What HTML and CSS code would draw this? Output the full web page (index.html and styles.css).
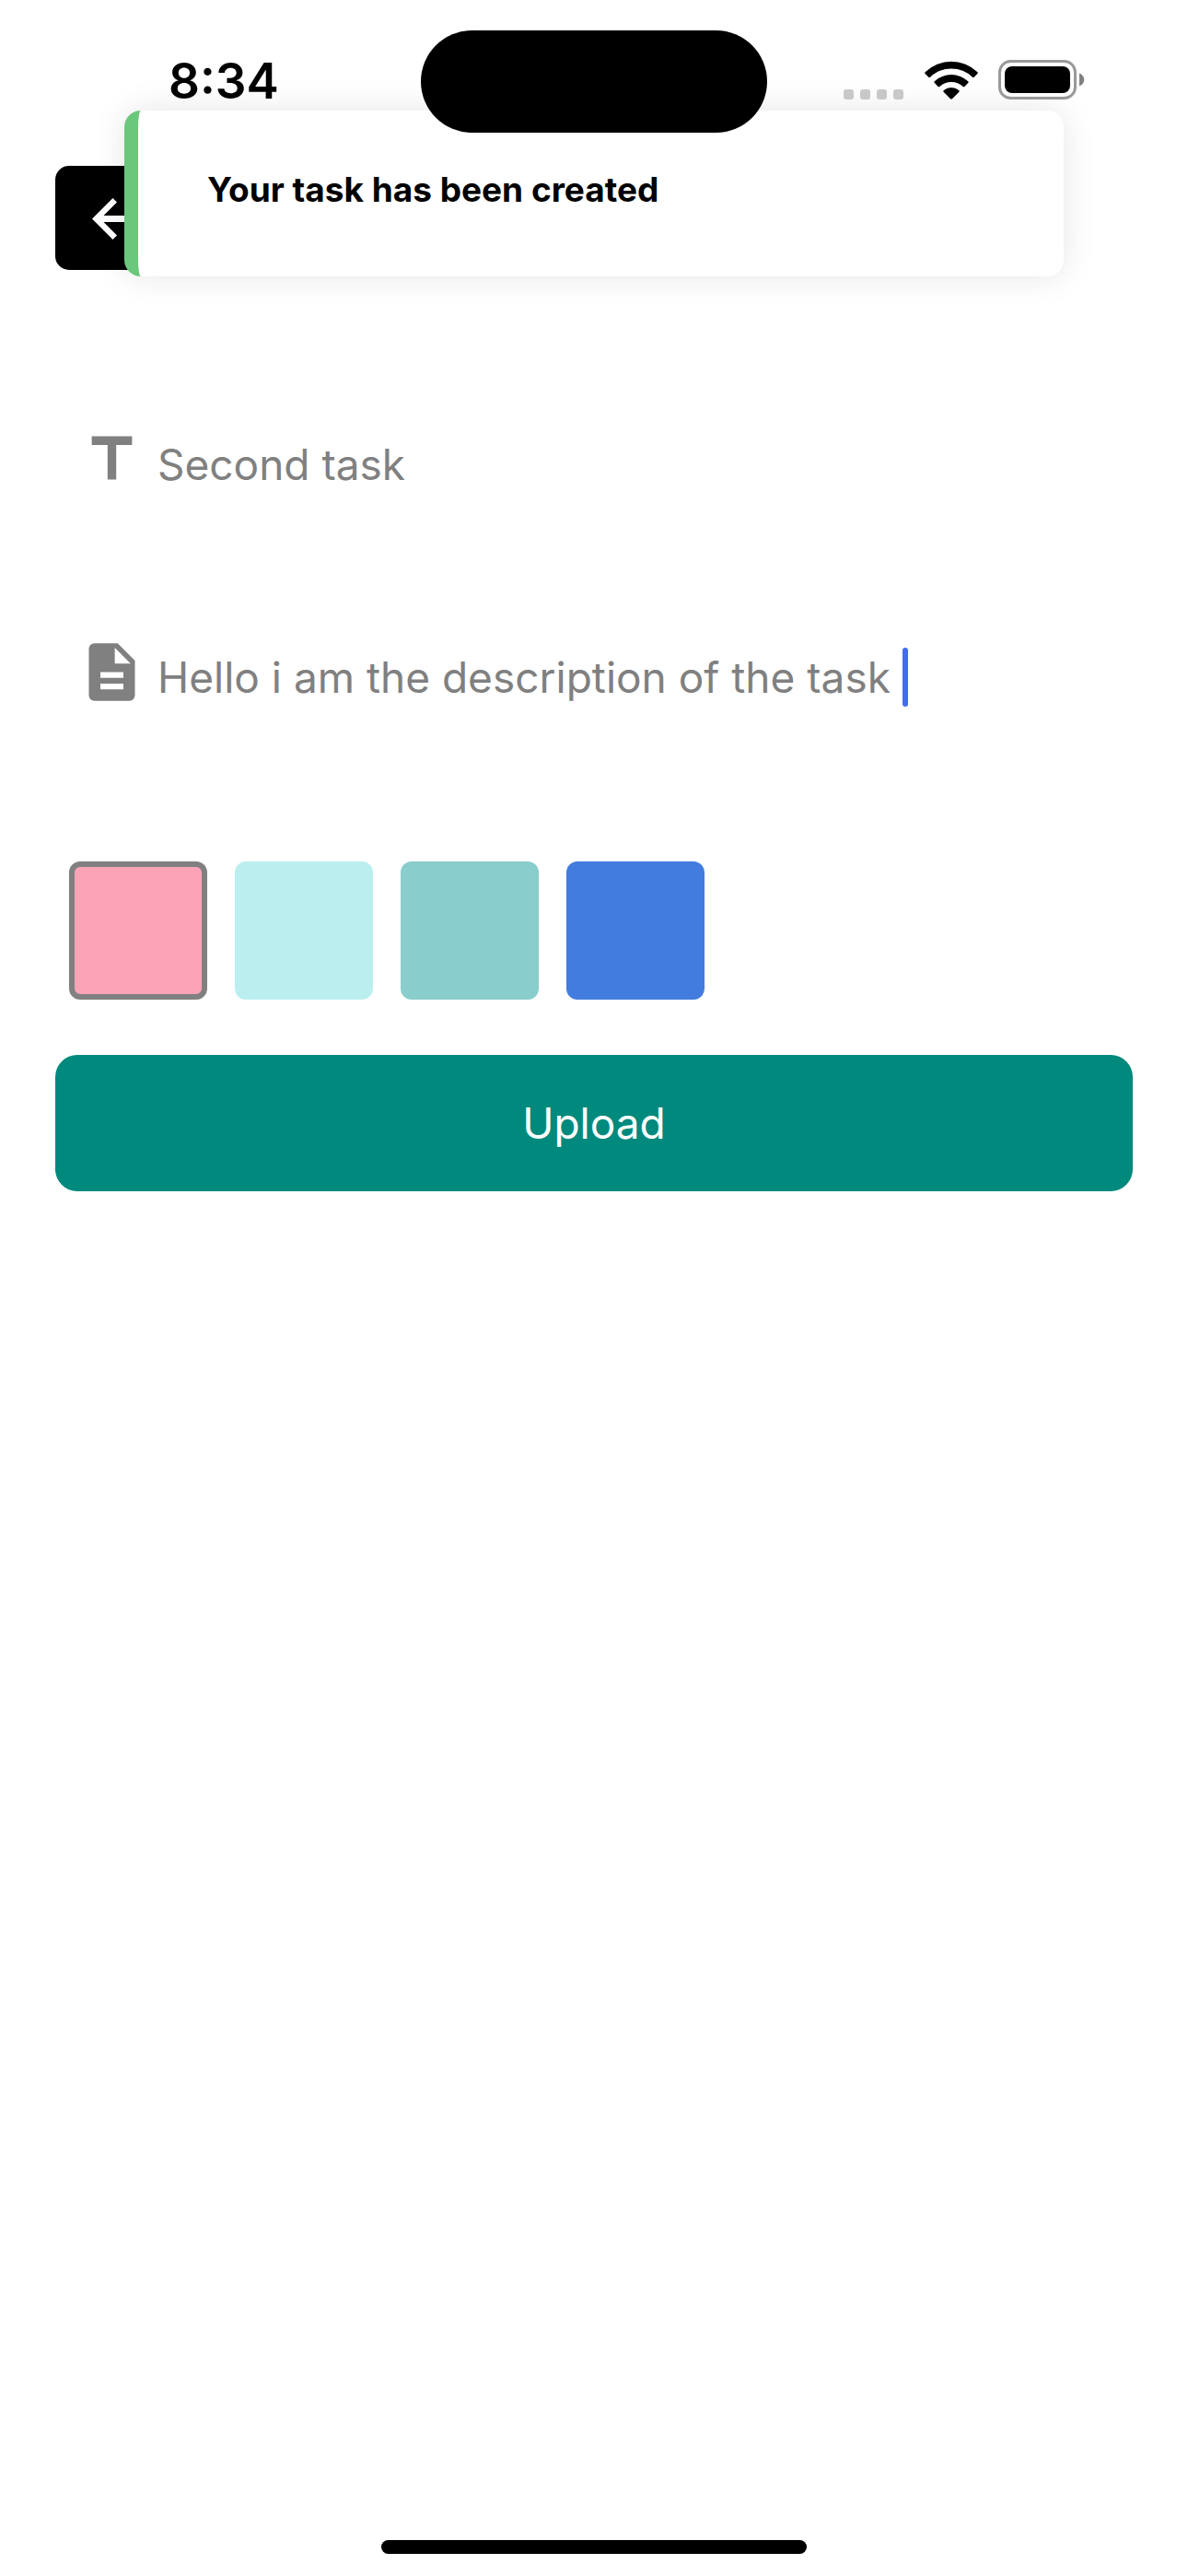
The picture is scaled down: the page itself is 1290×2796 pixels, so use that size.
FILE: index.html
```html
<!DOCTYPE html>
<html lang="en">
<head>
  <meta charset="utf-8">
  <meta name="viewport" content="width=device-width, initial-scale=1">
  <title>New task</title>
  <link rel="stylesheet" href="styles.css">
</head>
<body>
  <div class="screen">
    <header class="status-bar">
      <time class="clock">8:34</time>
      <div class="status-icons">
        <svg class="signal" viewBox="0 0 65 11" aria-hidden="true">
          <rect width="11" height="11" rx="3"/>
          <rect x="18" width="11" height="11" rx="3"/>
          <rect x="36" width="11" height="11" rx="3"/>
          <rect x="54" width="11" height="11" rx="3"/>
        </svg>
        <svg class="wifi" viewBox="0 0 58 42" aria-hidden="true">
          <path d="M.6 12.2a41 41 0 0 1 56.8 0q.9.9 0 1.8l-3.700 3.700q-.9.9-1.800 0a33 33 0 0 0-45.800 0q-.9.900-1.800 0L.6 14q-.9-.9 0-1.800z"/>
          <path d="M10.800 22.300a26.500 26.500 0 0 1 36.400 0q.9.900 0 1.800l-3.800 3.800q-.9.900-1.800 0a18.400 18.400 0 0 0-25.200 0q-.9.900-1.800 0l-3.800-3.800q-.9-.9 0-1.800z"/>
          <path d="M20.800 32a12.500 12.500 0 0 1 16.400 0q1 .9 0 1.900l-7.300 7.300q-.9.900-1.800 0l-7.300-7.300q-1-1 0-1.900z"/>
        </svg>
        <svg class="battery" viewBox="0 0 94 43" aria-hidden="true">
          <rect x="1.500" y="1.500" width="82" height="40" rx="12" fill="none" stroke="#999" stroke-width="3"/>
          <rect x="7" y="7" width="71" height="29" rx="8"/>
          <path d="M88 14.500c7 2.500 7 11.500 0 14z" fill="#808080"/>
        </svg>
      </div>
    </header>

    <nav class="top-nav">
      <button class="back" type="button" aria-label="Back">
        <svg class="back-icon" viewBox="0 0 48 48" aria-hidden="true">
          <path d="M0 24.500 22.500 2l4.500 4.500L12.500 21H46v7H12.500L27 42.500 22.500 47z"/>
        </svg>
      </button>
    </nav>

    <form class="task-form">
      <label class="field">
        <svg class="field-icon" viewBox="0 0 24 24" role="img" aria-label="Title">
          <path d="M5 4v3h5.500v12h3V7H19V4z"/>
        </svg>
        <input class="field-input" type="text" name="title" value="Second task">
      </label>
      <label class="field">
        <svg class="field-icon" viewBox="0 0 24 24" role="img" aria-label="Description">
          <path d="M14 2H6c-1.100 0-2 .9-2 2v16c0 1.100.9 2 2 2h12c1.100 0 2-.9 2-2V8l-6-6zm2 16H8v-2h8v2zm0-4H8v-2h8v2zm-3-5V3.500L18.500 9H13z"/>
        </svg>
        <input class="field-input" type="text" name="description" value="Hello i am the description of the task ">
        <span class="caret"></span>
      </label>

      <fieldset class="swatches" aria-label="Colour">
        <input class="swatch pink" type="radio" name="colour" aria-label="Pink" checked>
        <input class="swatch ice" type="radio" name="colour" aria-label="Ice">
        <input class="swatch teal" type="radio" name="colour" aria-label="Teal">
        <input class="swatch blue" type="radio" name="colour" aria-label="Blue">
      </fieldset>

      <button class="upload" type="submit">Upload</button>
    </form>

    <div class="home-indicator"></div>
    <div class="toast" role="status">Your task has been created</div>
    <div class="island"></div>
  </div>
</body>
</html>
```
FILE: styles.css
```css
* {
  box-sizing: border-box;
}

body {
  margin: 0;
  background: #fff;
  color: #000;
  font-family: Inter, "Liberation Sans", sans-serif;
}

.screen {
  position: relative;
  display: flex;
  flex-direction: column;
  min-height: 100vh;
  padding-bottom: 24px;
}

/* Status bar */
.status-bar {
  position: relative;
  z-index: 2;
  display: flex;
  justify-content: space-between;
  align-items: flex-end;
  height: 120px;
  padding: 0 112px 12px 183px;
}

.clock {
  font-size: 53px;
  font-weight: 600;
  line-height: 40px;
}

.status-icons {
  display: flex;
  align-items: flex-end;
}

.signal {
  width: 65px;
  height: 11px;
  margin-right: 23px;
  fill: #c8c8c8;
}

.wifi {
  width: 58px;
  height: 42px;
  margin-right: 22px;
}

.battery {
  width: 94px;
  height: 43px;
}

/* Back button */
.top-nav {
  padding: 60px 60px 0;
}

.back {
  display: flex;
  align-items: center;
  width: 129px;
  height: 113px;
  padding: 0 40px;
  border: 0;
  border-radius: 15px;
  background: #000;
}

.back-icon {
  flex: none;
  width: 48px;
  height: 48px;
  fill: #fff;
}

/* Form */
.task-form {
  display: flex;
  flex-direction: column;
  padding: 168px 60px 0;
}

.field {
  display: flex;
  align-items: flex-end;
  height: 75px;
  margin-bottom: 156px;
  padding: 0 24px;
}

.field-icon {
  flex: none;
  width: 75px;
  height: 75px;
  margin-right: 12px;
  fill: #808080;
}

.field-input {
  field-sizing: content;
  height: 64px;
  padding: 0;
  border: 0;
  outline: 0;
  background: none;
  color: #808080;
  font: 400 46px/64px Inter, "Liberation Sans", sans-serif;
}

.caret {
  flex: none;
  width: 6px;
  height: 64px;
  border-radius: 3px;
  background: #426cf2;
}

.swatches {
  display: flex;
  gap: 30px;
  margin: 12px 0 60px;
  padding: 0 15px;
  border: 0;
}

.swatch {
  appearance: none;
  width: 150px;
  height: 150px;
  margin: 0;
  border-radius: 12px;
}

.swatch:checked {
  border: 6px solid #808080;
}

.pink {
  background: #fda3b8;
}

.ice {
  background: #bbefef;
}

.teal {
  background: #89cdcc;
}

.blue {
  background: #427cdf;
}

.upload {
  height: 148px;
  border: 0;
  border-radius: 24px;
  background: #00897d;
  color: #fff;
  font: 400 46px/64px Inter, "Liberation Sans", sans-serif;
}

.home-indicator {
  align-self: center;
  width: 462px;
  height: 15px;
  margin-top: auto;
  border-radius: 8px;
  background: #000;
}

/* Overlays */
.toast {
  position: absolute;
  top: 120px;
  right: 135px;
  left: 135px;
  z-index: 1;
  height: 180px;
  padding: 62px 75px;
  border-left: 15px solid #6bc77b;
  border-radius: 18px;
  background: #fff;
  box-shadow: 0 0 36px rgba(0, 0, 0, 0.1);
  font-size: 37px;
  font-weight: 700;
  line-height: 48px;
}

.island {
  position: absolute;
  top: 33px;
  left: 50%;
  z-index: 3;
  width: 376px;
  height: 111px;
  border-radius: 56px;
  background: #000;
  transform: translateX(-50%);
}
```
